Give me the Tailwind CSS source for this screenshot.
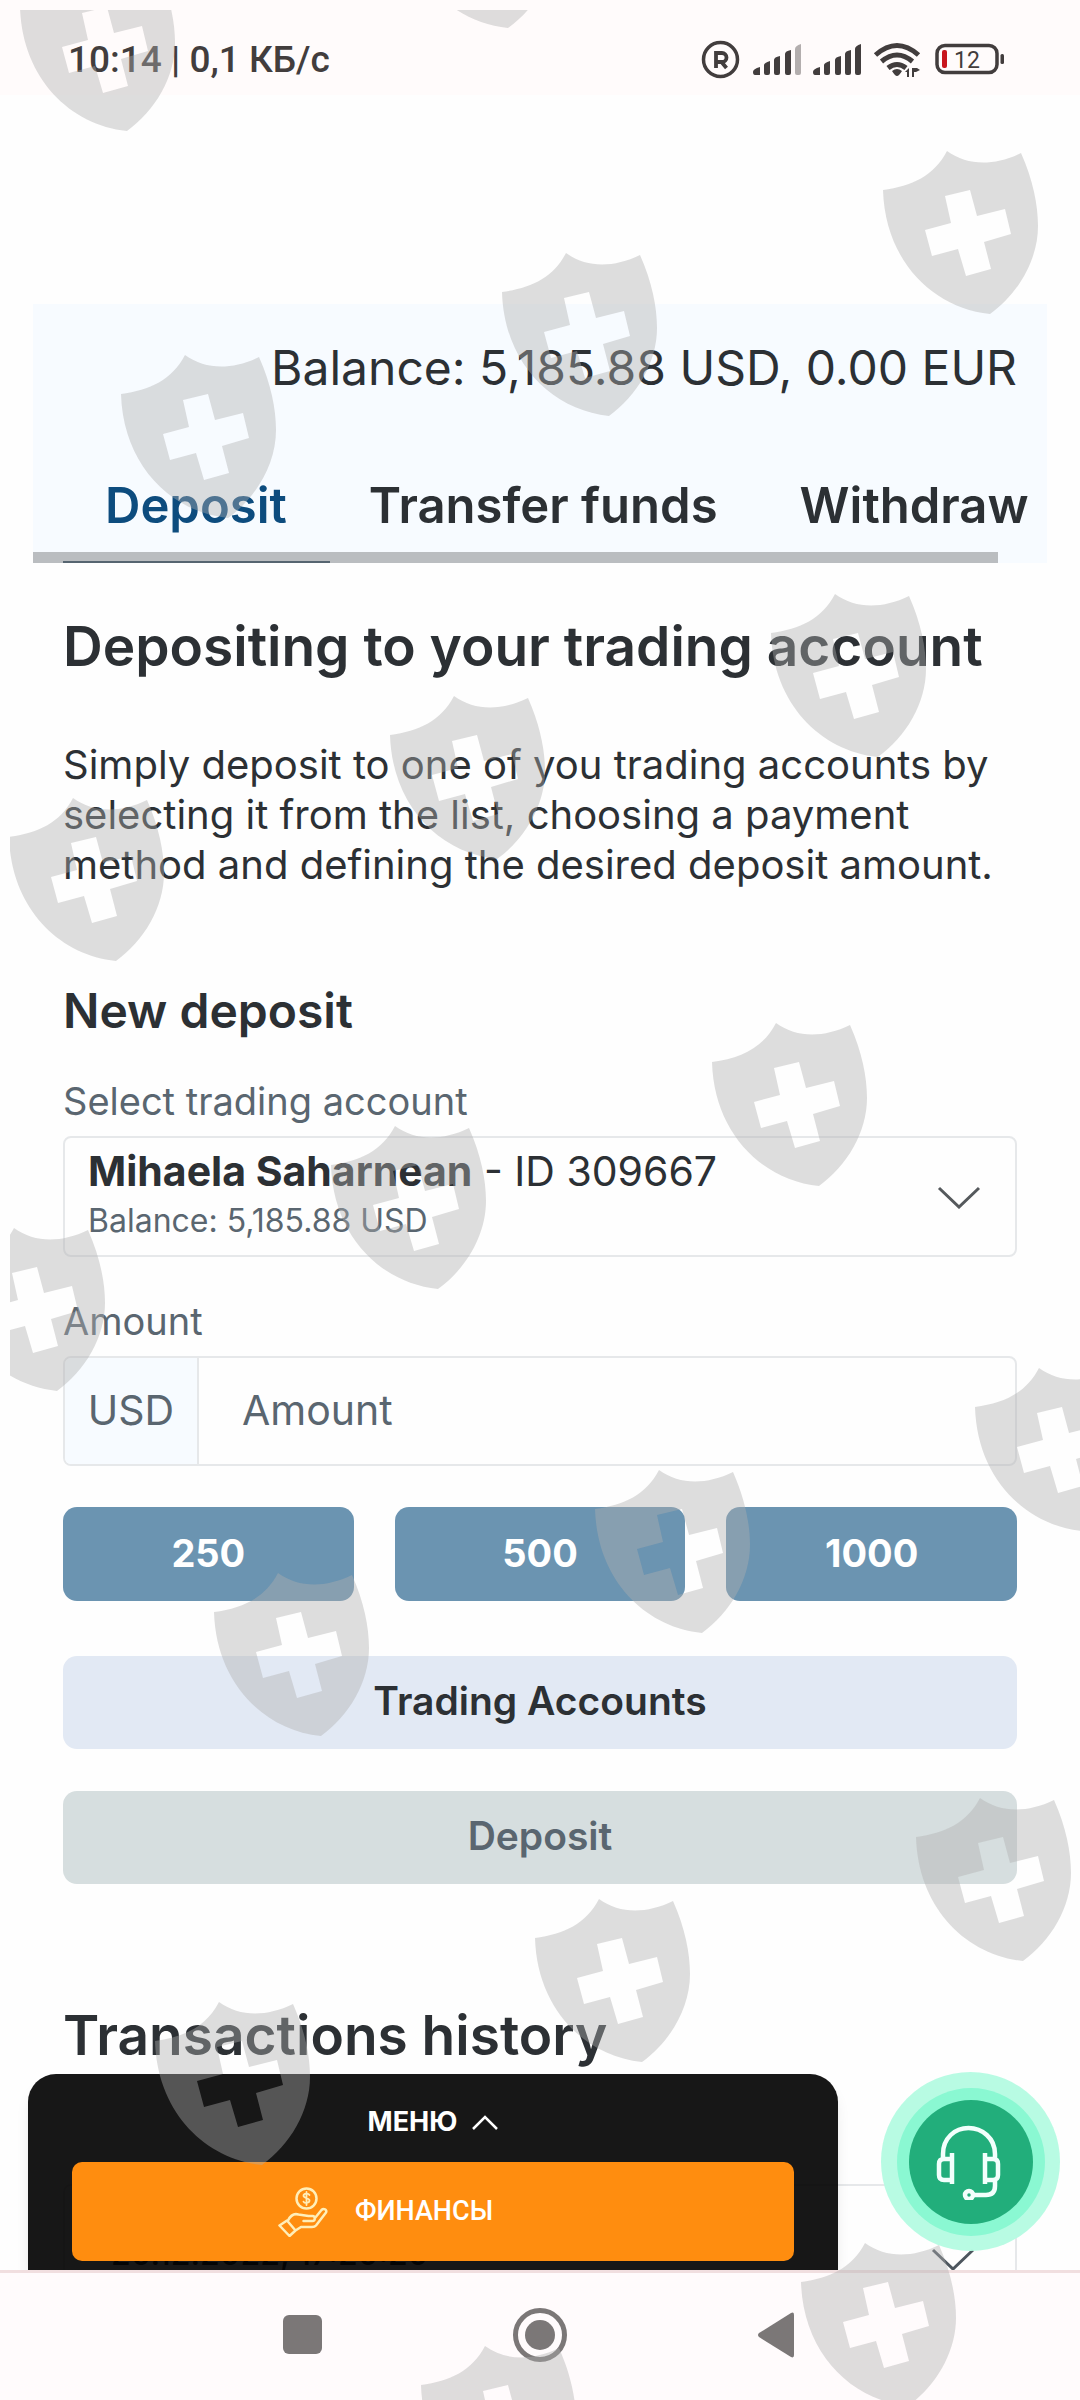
<!DOCTYPE html>
<html lang="en">
<head>
<meta charset="utf-8">
<meta name="viewport" content="width=device-width, initial-scale=1">
<title>Deposit</title>
<script src="https://cdn.jsdelivr.net/npm/@tailwindcss/browser@4"></script>
</head>
<body class="relative flex h-screen flex-col overflow-hidden bg-[#fefefe] font-['Inter',sans-serif] text-[#2c3034]">

<!-- Status bar -->
<header class="flex h-[95px] shrink-0 items-center justify-between bg-[#fffbfb] pt-6 pr-[76px] pl-[68px] text-[#423d3d]">
  <span class="font-['Roboto',sans-serif] text-[37px] leading-[48px] font-medium">10:14 | 0,1 КБ/с</span>
  <svg class="h-[40px] w-[304px]" viewBox="700 40 304 40" fill="none" aria-hidden="true">
    <circle cx="720.500" cy="59.500" r="17" stroke="currentColor" stroke-width="3.500"/>
    <path d="M716 68V53h6a4.300 4.300 0 0 1 0 9h-6M721.500 62l5 6" stroke="currentColor" stroke-width="3.800"/>
    <g fill="currentColor">
      <path d="M753 72q0-3 7-5v8h-5q-2 0-2-3ZM764 65q0-2 6-4v12q0 2-2 2h-2q-2 0-2-2ZM774 60q0-3 6-4v17q0 2-2 2h-2q-2 0-2-2ZM785 54q0-3 6-4v23q0 2-2 2h-2q-2 0-2-2Z"/>
      <path opacity=".4" d="M795 49q0-3 6-5v29q0 2-2 2h-2q-2 0-2-2Z"/>
      <path d="M813 72q0-3 7-5v8h-5q-2 0-2-3ZM824 65q0-2 6-4v12q0 2-2 2h-2q-2 0-2-2ZM835 60q0-3 6-4v17q0 2-2 2h-2q-2 0-2-2ZM845 54q0-3 6-4v23q0 2-2 2h-2q-2 0-2-2ZM855 49q0-3 6-5v29q0 2-2 2h-2q-2 0-2-2Z"/>
      <path d="M892 71q5-4 10 0q-3 5-5 5t-5-5ZM907 77v-5h-2l4-4v9ZM912 68v9h2v-5h2l4-2l-3-2Z"/>
    </g>
    <g stroke="currentColor" stroke-width="5">
      <path d="M875.500 55q21.500-19 43 0M881.500 61.500q15.500-13 31 0M888 68q9-7 18 0"/>
    </g>
    <rect x="937" y="45.500" width="60" height="27" rx="8" stroke="currentColor" stroke-width="3.500"/>
    <rect x="942" y="50" width="5" height="18" rx="2" fill="#c8161d"/>
    <rect x="1000.500" y="54" width="3.500" height="10" rx="1.500" fill="currentColor"/>
    <text x="954" y="68" font-family="Roboto, sans-serif" font-size="23" fill="currentColor">12</text>
  </svg>
</header>

<!-- Page -->
<main class="relative min-h-0 flex-1 overflow-hidden pt-[209px]">
  <section class="mx-[33px] bg-[#f7fbff] pt-8">
    <p class="pr-[30px] text-right text-[48px] leading-[64px]">Balance: 5,185.88 USD, 0.00 EUR</p>
    <nav class="mt-[74px] overflow-hidden pb-[14px] whitespace-nowrap">
      <ul class="flex gap-[82px] pl-[72px] text-[49px] leading-[64px] font-semibold">
        <li><a href="#deposit" class="text-[#0d4c7e]">Deposit</a></li>
        <li><a href="#transfer">Transfer funds</a></li>
        <li><a href="#withdraw">Withdraw</a></li>
      </ul>
    </nav>
    <div class="mr-[49px] flex h-[11px] items-end bg-[#babdc0] pl-[30px]"><div class="h-[2px] w-[267px] bg-[#566570]"></div></div>
  </section>

  <div class="px-[63px]">
    <h1 class="mt-[51px] text-[55px] leading-[64px] font-semibold whitespace-nowrap">Depositing to your trading account</h1>
    <p class="mt-[62px] text-[40px] leading-[50px] whitespace-nowrap">Simply deposit to one of you trading accounts by<br>selecting it from the list, choosing a payment<br>method and defining the desired deposit amount.</p>

    <form id="deposit">
      <h2 class="mt-[93px] text-[48px] leading-[56px] font-semibold">New deposit</h2>
      <label for="account" class="mt-[38px] block text-[38px] leading-[48px] text-[#5a6670]">Select trading account</label>
      <div class="relative mt-[11px] flex h-[121px] items-center justify-between rounded-lg border-2 border-[#e6e8ea] pr-[34px] pl-[23px]">
        <div class="pb-1">
          <p class="text-[41px] leading-[52px]"><b>Mihaela Saharnean</b> - ID 309667</p>
          <p class="text-[32px] leading-[48px] text-[#5a6670]">Balance: 5,185.88 USD</p>
        </div>
        <svg class="h-[24px] w-[44px] text-[#55595c]" viewBox="0 0 44 24" fill="none" stroke="currentColor" stroke-width="3" aria-hidden="true"><path d="M2 3l20 19L42 3"/></svg>
        <select id="account" class="absolute inset-0 h-full w-full opacity-0"><option>Mihaela Saharnean - ID 309667</option></select>
      </div>

      <label for="amount" class="mt-[40px] block text-[38px] leading-[48px] text-[#5a6670]">Amount</label>
      <div class="mt-[11px] flex h-[110px] overflow-hidden rounded-lg border-2 border-[#e6e8ea] text-[41px] text-[#5a6670]">
        <span class="flex w-[134px] shrink-0 items-center justify-center border-r-2 border-[#e6e8ea] bg-[#f7fbff]">USD</span>
        <input id="amount" type="text" placeholder="Amount" class="min-w-0 flex-1 px-[43px] placeholder:text-[#5a6670]">
      </div>

      <div class="mt-[41px] grid grid-cols-3 gap-[41px] text-[38px] font-bold text-white">
        <button type="button" class="h-[94px] rounded-[14px] bg-[#6b94b1] pb-0.5">250</button>
        <button type="button" class="h-[94px] rounded-[14px] bg-[#6b94b1] pb-0.5">500</button>
        <button type="button" class="h-[94px] rounded-[14px] bg-[#6b94b1] pb-0.5">1000</button>
      </div>
      <button type="button" class="mt-[55px] block h-[93px] w-full rounded-[14px] bg-[#e2e9f4] pb-0.5 text-[39px] font-semibold">Trading Accounts</button>
      <button type="submit" class="mt-[42px] block h-[93px] w-full rounded-[14px] bg-[#d6dedf] pb-0.5 text-[39px] font-semibold text-[#5a6670]">Deposit</button>
    </form>

    <h2 class="mt-[119px] text-[55px] leading-[64px] font-semibold">Transactions history</h2>
    <div class="mt-[117px] flex h-[160px] items-start justify-between rounded-t-lg border-2 border-[#e6e8ea] pt-[44px] pr-[40px] pl-[46px]">
      <p class="text-[32px] leading-[48px] font-medium">20.12.2022, 17:20:20</p>
      <svg class="mt-[18px] h-[24px] w-[44px] text-[#4d565e]" viewBox="0 0 44 24" fill="none" stroke="currentColor" stroke-width="3" aria-hidden="true"><path d="M2 2l20 19L42 2"/></svg>
    </div>
  </div>

  <!-- Menu drawer -->
  <div class="absolute right-[242px] bottom-0 left-[28px] rounded-t-[28px] bg-black/91 px-[44px] pb-[9px] text-white shadow-lg">
    <button type="button" class="flex h-[88px] w-full items-center justify-center gap-[15px] pt-2 text-[27px] font-bold">МЕНЮ
      <svg class="h-[15px] w-[26px]" viewBox="0 0 26 15" fill="none" stroke="currentColor" stroke-width="2.500" aria-hidden="true"><path d="M1 14L13 2l12 12"/></svg>
    </button>
    <a href="#finance" class="flex h-[99px] items-center gap-[27px] rounded-[10px] bg-[#ff8d0f] pl-[206px] font-['Roboto',sans-serif] text-[27px] font-medium">
      <svg class="h-[50px] w-[50px]" viewBox="0 0 50 50" fill="none" stroke="#ffeeb8" stroke-width="2.500" stroke-linejoin="round" stroke-linecap="round" aria-hidden="true">
        <circle cx="28.500" cy="11.500" r="10"/>
        <path d="M31.500 8c-1-2-6-2-6 .8s6 2 6 4.800-5 3-6 1M28.500 5v13" stroke-width="1.800"/>
        <path d="M1.500 38.500l7.500-5 8.500 10-6 5.500ZM10 33.500c3-6 7-7 10.500-6l10 1.500h4c3 0 3 5 0 5h-9M37 31l6.500-8c2-2 6-.5 4.500 2.500L38 38.500c-1 1.200-2 1.500-4 1.500H23l-5.500 3.500"/>
      </svg>
      ФИНАНСЫ</a>
  </div>

  <!-- Support chat -->
  <button type="button" aria-label="Support" class="absolute right-5 bottom-[19px] grid h-[179px] w-[179px] place-items-center rounded-full bg-[#b6fbe2]/97">
    <span class="grid h-[148px] w-[148px] place-items-center rounded-full bg-[#8af8d2]">
      <span class="grid h-[124px] w-[124px] place-items-center rounded-full bg-[#22ae7b]">
        <svg class="mr-1 h-[76px] w-[66px]" viewBox="0 0 66 76" fill="none" stroke="#f2fffc" stroke-width="4.500" aria-hidden="true">
          <path d="M7 34V30C7 14 19 4 32.500 4S59 14 59 30v4M16 29v31M49 29v31M16 35H8q-5 0-5 5v11q0 5 5 5h8M49 35h8q5 0 5 5v11q0 5-5 5h-8M59 56v6q0 9-9 9H37"/>
          <circle cx="33" cy="71" r="4"/>
        </svg>
      </span>
    </span>
  </button>
</main>

<!-- System navigation -->
<nav class="grid h-[130px] shrink-0 grid-cols-[1fr_54px_1fr] items-center justify-items-center border-t-3 border-[#f1dfe0] bg-[#fffbfc] pb-1 text-[#7b7777]">
  <button type="button" aria-label="Recent apps" class="mr-[191px] ml-auto h-[39px] w-[39px] rounded-md bg-[#7b7777]"></button>
  <button type="button" aria-label="Home" class="grid h-[54px] w-[54px] place-items-center rounded-full border-[5px] border-[#7b7777]"><span class="h-[30px] w-[30px] rounded-full bg-[#7b7777]"></span></button>
  <button type="button" aria-label="Back" class="mr-auto ml-[190px]"><svg class="h-[46px] w-[38px]" viewBox="0 0 38 46" fill="currentColor"><path d="M34 1q3-1.500 3 2v40q0 3.500-3 2L2 25q-2-2 0-4Z"/></svg></button>
</nav>

<!-- Shield watermark -->
<div class="pointer-events-none absolute top-[10px] right-0 bottom-0 left-[10px] overflow-hidden">
  <svg class="h-full w-full" fill="#b0b0b0" fill-opacity=".41" aria-hidden="true">
    <defs>
      <path id="shield" fill-rule="evenodd" d="M1 40C30 36 52 26 65 1C86 16 112 16 139 3C151 30 156 55 156 76C156 110 136 144 108 164C50 158 3 110 1 40ZM63 46L69 73L43 80L50 106L76 99L84 126L109 119L102 92L129 84L123 59L95 66L88 40Z"/>
    </defs>
    <g transform="translate(-10 -10)">
      <use href="#shield" x="19" y="-33"/><use href="#shield" x="400" y="-136"/>
      <use href="#shield" x="882" y="150"/><use href="#shield" x="501" y="252"/><use href="#shield" x="120" y="354"/>
      <use href="#shield" x="770" y="593"/><use href="#shield" x="389" y="695"/><use href="#shield" x="8" y="797"/>
      <use href="#shield" x="711" y="1022"/><use href="#shield" x="330" y="1125"/><use href="#shield" x="-51" y="1227"/>
      <use href="#shield" x="974" y="1367"/><use href="#shield" x="594" y="1469"/><use href="#shield" x="213" y="1572"/>
      <use href="#shield" x="915" y="1797"/><use href="#shield" x="534" y="1898"/><use href="#shield" x="154" y="2001"/>
      <use href="#shield" x="800" y="2242"/><use href="#shield" x="420" y="2345"/>
    </g>
  </svg>
</div>
</body>
</html>
